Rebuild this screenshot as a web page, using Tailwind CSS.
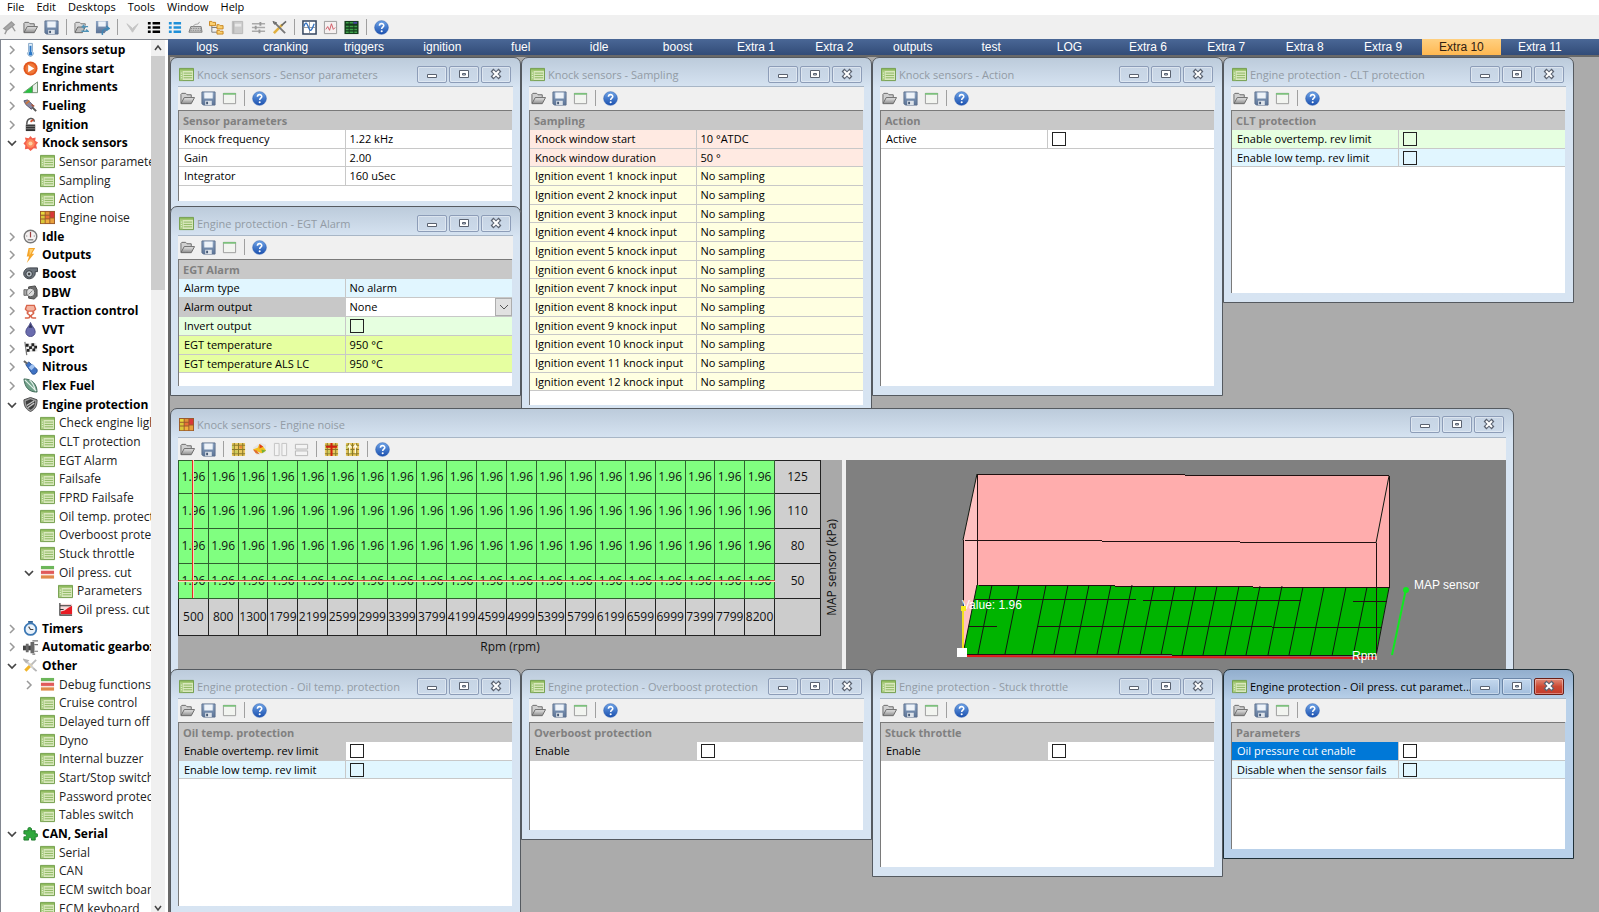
<!DOCTYPE html>
<html lang="en">
<head>
  <meta charset="UTF-8" />
  <meta name="viewport" content="width=device-width, initial-scale=1.0" />
  <title>ECU Client</title>
  <script src="https://cdn.jsdelivr.net/npm/@tailwindcss/browser@4"></script>
</head>
<body class="h-screen flex flex-col overflow-hidden bg-[#f0f0f0] text-black text-[12px] leading-4 font-['Open_Sans','Noto_Sans',sans-serif]">

  <!-- Icon set -->
  <svg class="absolute size-0" aria-hidden="true">
    <defs>
      <linearGradient id="g-blue" x2="0" y2="1"><stop stop-color="#6ea4e8" /><stop offset="1" stop-color="#1a4fae" /></linearGradient>
      <linearGradient id="g-grey" x2="0" y2="1"><stop stop-color="#e8e8e8" /><stop offset="1" stop-color="#8c8c8c" /></linearGradient>
      <linearGradient id="g-disk" x2="0" y2="1"><stop stop-color="#8fa6c4" /><stop offset="1" stop-color="#5b7396" /></linearGradient>
    </defs>
    <symbol id="i-open" viewBox="0 0 16 16"><path d="M1 13V3.500L2 2.500h4l1.500 1.500H12v2.500" fill="#d0d0d0" stroke="#666" /><path d="M1 13.500L4.500 7H15.500L12 13.500z" fill="url(#g-grey)" stroke="#666" /></symbol>
    <symbol id="i-save" viewBox="0 0 16 16"><path d="M1 1h14v14H2.500L1 13.500z" fill="url(#g-disk)" stroke="#5c6f8c" /><path d="M3.500 1.500h9V8h-9z" fill="#eef3f9" /><path d="M4.500 10.500h7V15h-7z" fill="#dde3ea" /><path d="M5.500 11.500h2V14h-2z" fill="#475a75" /></symbol>
    <symbol id="i-window" viewBox="0 0 16 16"><path d="M1.500 2.500h13v11h-13z" fill="#f2f4f0" stroke="#9a9a9a" /><path d="M1 2h14v2H1z" fill="#7cc07c" /></symbol>
    <symbol id="i-help" viewBox="0 0 16 16"><circle cx="8" cy="8" r="7.300" fill="url(#g-blue)" stroke="#2a5cb0" stroke-width=".6" /><path d="M5.800 6.200c0-3 4.600-3 4.600-.3 0 1.700-2.200 1.800-2.200 3.600" fill="none" stroke="#fff" stroke-width="1.700" /><circle cx="8.200" cy="11.900" r="1.100" fill="#fff" /></symbol>
    <symbol id="i-plug" viewBox="0 0 16 16"><path d="M2 9l8-7 3 3-8 6zM5 11l-2 4M11 7l3 5" fill="#a8a8a8" stroke="#999" stroke-width="1.500" /></symbol>
    <symbol id="i-openarrow" viewBox="0 0 16 16"><path d="M1 13V3.500L2 2.500h4l1.500 1.500H12v2" fill="#d8d8d8" stroke="#777" /><path d="M1 13.500L4 7.500H12L9 13.500z" fill="#bbb" stroke="#666" /><path d="M15 7H9l2-2M9 7l2 2M8 12h7l-2-2" fill="none" stroke="#4f93b8" stroke-width="1.400" /></symbol>
    <symbol id="i-savearrow" viewBox="0 0 16 16"><path d="M1 1h13v8l-4 5H1z" fill="url(#g-disk)" /><path d="M3.500 1.500h8V7h-8z" fill="#eef3f9" /><path d="M8 16c-1-5 1-7 7-7l-3-2.500M15 9l-3 2.500" fill="none" stroke="#3f87b4" stroke-width="1.600" /></symbol>
    <symbol id="i-vee" viewBox="0 0 16 16"><path d="M2 4l6 9 6-9-6 5z" fill="#c4c4c4" stroke="#c4c4c4" /></symbol>
    <symbol id="i-list" viewBox="0 0 16 16"><path d="M2 3.500h3M7 3.500h8M2 8h3M7 8h8M2 12.500h3M7 12.500h8" stroke="currentColor" stroke-width="2.600" /></symbol>
    <symbol id="i-keyboard" viewBox="0 0 16 16"><path d="M3 7h11l1 6H1z" fill="#c9c9c9" stroke="#777" /><path d="M3 9h11M2.500 11h12" stroke="#888" stroke-dasharray="1.500 1" /><path d="M6 7c0-4 6-1 6-5" fill="none" stroke="#999" /></symbol>
    <symbol id="i-folders" viewBox="0 0 16 16"><path d="M3 6v7h6M3 8h6" fill="none" stroke="#777" /><path d="M.5 1.500h2.500l1 1h3v3.500h-6.500zM8.500 5h2.500l1 1h3v3.500h-6.500zM8.500 11h2.500l1 1h3v3h-6.500z" fill="#fbd070" stroke="#c7841d" /></symbol>
    <symbol id="i-doc" viewBox="0 0 16 16"><path d="M2.500 1.500h11v13h-11z" fill="#ccc" stroke="#b8b8b8" /><path d="M5 4h7v3H5z" fill="#e8e8e8" /><path d="M4 2v12" stroke="#aaa" /></symbol>
    <symbol id="i-sliders" viewBox="0 0 16 16"><path d="M1 4h14M1 8h14M1 12h14" stroke="#aaa" stroke-width="1.400" /><path d="M10 2v4M5 6v4M9 10v4" stroke="#999" stroke-width="2" /></symbol>
    <symbol id="i-tools" viewBox="0 0 16 16"><path d="M2 14L11 5" stroke="#e0b040" stroke-width="2.800" /><path d="M10 6l5-4.500" stroke="#666" stroke-width="1.600" /><path d="M3 3l11 11" stroke="#777" stroke-width="2" /><path d="M1 1.500l1.500 3L5 3z" fill="#888" stroke="#666" /></symbol>
    <symbol id="i-toolslight" viewBox="0 0 16 16"><path d="M2.500 13.500L9 7" stroke="#f0b428" stroke-width="3.200" /><path d="M9 7l5-5" stroke="#bbb" stroke-width="2" /><path d="M4 4l7 7" stroke="#cfcfcf" stroke-width="2.200" /><path d="M1.500 2l2 2.500L5 3zM11 11l3.500 3" fill="#ccc" stroke="#b5b5b5" stroke-width="2" /></symbol>
    <symbol id="i-graph" viewBox="0 0 16 16"><path d="M1 1h14v14H1z" fill="#fff" stroke="#344660" stroke-width="1.600" /><path d="M8 2v12M2 8h12" stroke="#999" /><path d="M2 7c2-6 3-4 5 1s3 4 6-4" fill="none" stroke="#3170c0" stroke-width="1.400" /></symbol>
    <symbol id="i-graphred" viewBox="0 0 16 16"><path d="M1.500 1.500h13v13h-13z" fill="#f5f0f0" stroke="#999" /><path d="M3 10l2-3 2 4 2-7 2 6 2-2" fill="none" stroke="#d05560" /></symbol>
    <symbol id="i-bars" viewBox="0 0 16 16"><path d="M.5 1h15v14H.5z" fill="#143c1c" /><path d="M2 3h3M6 3h4M2 7h3M6 7h4M11 7h3M2 10h3M6 10h4M11 10h3M2 13h3M6 13h4M11 13h3" stroke="#3fa14b" stroke-width="1.600" /><path d="M10 3h4" stroke="#4c46a8" stroke-width="2" /></symbol>
    <symbol id="i-heat" viewBox="0 0 16 16"><path d="M1 1h14v14H1z" fill="#e8c860" /><path d="M3.500 1v14M8 1v14M12.500 1v14M1 3.500h14M1 8h14M1 12.500h14" stroke="#8a7a28" stroke-width="1.100" /><path d="M9 4h3v3H9z" fill="#f08a3a" /><path d="M1 4h2v3H1zM4 9h3v3H4z" fill="#c7cc5c" /></symbol>
    <symbol id="i-surface" viewBox="0 0 16 16"><path d="M1 6l4 8 10-3V3L9 1z" fill="#e4e4e4" /><path d="M1 8l5-2 2-4 4 3 3 4-5 3z" fill="#f4c020" /><path d="M8 2l4 3-4 2z" fill="#e04018" /><path d="M1 8l4 1 3 4-4-1z" fill="#e0702c" /><path d="M10 8l5 1-4 3z" fill="#7ab034" /></symbol>
    <symbol id="i-cols" viewBox="0 0 16 16"><path d="M1.500 1.500h5v13h-5zM9.500 1.500h5v13h-5z" fill="#f3f3f3" stroke="#c2c2c2" /></symbol>
    <symbol id="i-rows" viewBox="0 0 16 16"><path d="M1.500 2.500h13v5h-13zM1.500 9.500h13v5h-13z" fill="#f3f3f3" stroke="#b5b5b5" /></symbol>
    <symbol id="i-heatred" viewBox="0 0 16 16"><use href="#i-heat" /><path d="M8 1v14M2 5h12" stroke="#d02010" stroke-width="2.200" /></symbol>
    <symbol id="i-heatmove" viewBox="0 0 16 16"><use href="#i-heat" /><path d="M5 12V4M11 12V4M3 6l2-3 2 3M9 6l2-3 2 3" fill="none" stroke="#fffbe0" stroke-width="1.400" /></symbol>

    <symbol id="i-form" viewBox="0 0 16 16"><path d="M.5 1.500h15v13H.5z" fill="#d9e8bd" stroke="#6d9a45" /><path d="M1 2h14v2H1z" fill="#8fbb5e" /><path d="M1 4h3v10H1z" fill="#a9cc80" /><path d="M5 6.500h9M5 9h9M5 11.500h9" stroke="#8ab45e" /><path d="M2 6.500h1M2 9h1M2 11.500h1" stroke="#f4faea" /></symbol>
    <symbol id="i-map" viewBox="0 0 16 16"><path d="M0 1h16v14H0z" fill="#9a5a2c" /><path d="M1 2h4v3H1z" fill="#e8d83c" /><path d="M6 2h4v3H6z" fill="#e09038" /><path d="M11 2h4v6h-4z" fill="#d83838" /><path d="M1 6h4v3H1zM1 10h4v4H1z" fill="#d8c838" /><path d="M6 6h4v3H6z" fill="#e87038" /><path d="M6 10h4v4H6z" fill="#f0b040" /><path d="M11 9h4v5h-4z" fill="#e8a03c" /></symbol>
    <symbol id="i-thermo" viewBox="0 0 16 16"><path d="M6 1.500h4V10a3 3 0 1 1-4 0z" fill="#e8f2fa" stroke="#7fa3c4" /><path d="M8 4v8" stroke="#2b78c8" stroke-width="2" /><circle cx="8" cy="12.500" r="2" fill="#2b78c8" /></symbol>
    <symbol id="i-play" viewBox="0 0 16 16"><circle cx="8" cy="8" r="7.500" fill="#e2571e" /><circle cx="8" cy="8" r="5.500" fill="#f07838" /><path d="M5.500 4l6.500 4-6.500 4z" fill="#fff" /></symbol>
    <symbol id="i-ramp" viewBox="0 0 16 16"><path d="M.5 13.500L15.500 2v11.500z" fill="#e8f0e8" stroke="#6b8a6b" /><path d="M1 13.500L10 6.500v7z" fill="#28c040" /><path d="M10 6v7.500" stroke="#6b8a6b" /></symbol>
    <symbol id="i-injector" viewBox="0 0 16 16"><path d="M1 3l4-1 6 6-2 4-6-5z" fill="#8a87a0" stroke="#55526a" /><path d="M3 6l4-3" stroke="#c87840" stroke-width="2" /><path d="M10 10l4 4" stroke="#555" stroke-width="2" /><path d="M9 7l3 2" stroke="#b0583c" stroke-width="1.500" /></symbol>
    <symbol id="i-coil" viewBox="0 0 16 16"><path d="M3 8h10v7H3z" fill="#333" /><path d="M4 8c0-8 8-8 8-3" fill="none" stroke="#555" stroke-width="1.600" /><path d="M3 10h10M3 12.500h10" stroke="#999" stroke-width=".8" /><path d="M8 5l3-2" stroke="#d05030" stroke-width="2" /></symbol>
    <symbol id="i-knock" viewBox="0 0 16 16"><path d="M8 0l2 2.500 3.500-1-.5 3.500 3 2-2 2.500 1 4-3.500-.5L8 16l-2.500-2.500-3.500.5.500-4L.5 8 3 5 2 1.500l4 1z" fill="#f4604c" /><circle cx="8" cy="8" r="4.500" fill="#ff8a5c" /><circle cx="8" cy="8" r="2.200" fill="#ffd0a0" /></symbol>
    <symbol id="i-gauge" viewBox="0 0 16 16"><circle cx="8" cy="8" r="6.700" fill="#f4f1f1" stroke="#777" stroke-width="1.500" /><path d="M8 3v6" stroke="#a04040" stroke-width="1.300" /><path d="M5 11.500h6" stroke="#888" stroke-width="1.500" /><path d="M3.500 7.500h1M11.500 7.500h1" stroke="#666" /></symbol>
    <symbol id="i-bolt" viewBox="0 0 16 16"><path d="M6 0h7L9.500 6H12L4 16l2.500-7H4z" fill="#f5a52a" /><path d="M7 1h4L7 8z" fill="#ffd070" /></symbol>
    <symbol id="i-turbo" viewBox="0 0 16 16"><path d="M7 2h8.500v4H13c1 6-5 9-9 7C-2 10 1 2 7 2z" fill="#6b727a" stroke="#3b4046" /><circle cx="6.500" cy="8.500" r="3.500" fill="#b9c0c6" stroke="#33383c" /><circle cx="6.500" cy="8.500" r="1.300" fill="#444" /></symbol>
    <symbol id="i-throttle" viewBox="0 0 16 16"><path d="M6 2l7-1 2 4v7l-3 3-6-1z" fill="#6d6d6d" stroke="#444" /><circle cx="8" cy="8" r="4.500" fill="#dcdcdc" stroke="#555" /><path d="M1 5h3v6H1z" fill="#a8a8a8" stroke="#666" /><path d="M6 10l4-4" stroke="#888" /></symbol>
    <symbol id="i-traction" viewBox="0 0 16 16"><path d="M4 1.500h8l1.500 4-2 2h-7l-2-2z" fill="#f4b3a0" stroke="#d8644a" stroke-width="1.400" /><path d="M6 8c-5 3 5 3 0 7M10 8c5 3-5 3 0 7M2 15h4M10 15h4" fill="none" stroke="#d8644a" stroke-width="1.700" /></symbol>
    <symbol id="i-drop" viewBox="0 0 16 16"><path d="M8 .5c1 4 5 6 5 10a5 5 0 0 1-10 0c0-4 4-6 5-10z" fill="#6a6cae" stroke="#4b4c86" /><path d="M8 1c0 2-2 4-2 5h4c0-1-2-3-2-5z" fill="#33345c" /></symbol>
    <symbol id="i-flag" viewBox="0 0 16 16"><path d="M2 1l2 14" stroke="#777" stroke-width="1.300" /><path d="M3 3l11-1 1.500 9-11 1z" fill="#e8e8e8" /><path d="M3 3h3v3H3zM9 2.500h3v3H9zM6.500 5.500h3v3h-3zM12 5h3v3h-3zM4 8.500h3v3H4zM10 8h3v3h-3z" fill="#222" /></symbol>
    <symbol id="i-bottle" viewBox="0 0 16 16"><path d="M3 5l3-3 9 8c1 3-2 6-5 5z" fill="#3f72c4" stroke="#27508f" /><path d="M6 8l4-4 3 3-4 4z" fill="#9fc0ee" /><path d="M1 1l3.500 3" stroke="#666" stroke-width="2.200" /></symbol>
    <symbol id="i-leaf" viewBox="0 0 16 16"><path d="M1 1c8 0 14 5 14 14C6 15 2 10 1 1z" fill="#6fa088" stroke="#3d6655" /><path d="M2 2l12 12M7 2c3 3 5 6 6 11" fill="none" stroke="#e4f0ea" stroke-width="1.300" /></symbol>
    <symbol id="i-shield" viewBox="0 0 16 16"><path d="M8 .5l7 2.500c0 7-2 10-7 12.500C3 13 1 10 1 3z" fill="#9a9a9a" stroke="#444" /><path d="M8 2.500l5 2c0 5-1.500 7-5 9-3.500-2-5-4-5-9z" fill="#3e3e3e" /><path d="M4 9l8-5M5 11.500l7-5" stroke="#c8c8c8" stroke-width="1.400" /></symbol>
    <symbol id="i-stack" viewBox="0 0 16 16"><path d="M1 1h14v3.500H1z" fill="#6cb65a" /><path d="M1 6h14v3.500H1z" fill="#e05a5a" /><path d="M1 11h14v3.500H1z" fill="#e08a4a" /><path d="M1 5.200h14M1 10.200h14" stroke="#f6e4dc" /></symbol>
    <symbol id="i-curve" viewBox="0 0 16 16"><path d="M2 2h13v11H2z" fill="#f4dada" /><path d="M3 13V10l4-1 4-3 4-2v9z" fill="#e81c24" /><path d="M2 1v13h13M2 4h12M2 8h4" fill="none" stroke="#333" stroke-width="1.200" /></symbol>
    <symbol id="i-clock" viewBox="0 0 16 16"><path d="M5.500 0h5v2h-5z" fill="#2c5f94" /><circle cx="8" cy="8.700" r="6.200" fill="#eaf2fa" stroke="#3c78b4" stroke-width="1.900" /><path d="M6 6l2 3h3" fill="none" stroke="#444" stroke-width="1.200" /></symbol>
    <symbol id="i-gearbox" viewBox="0 0 16 16"><path d="M0 6h12v5H0z" fill="#444" /><path d="M8 2h4v12H8zM3 4h3v9H3z" fill="#6a6a6a" /><path d="M10 1h6M12 5h4M12 12h4M10 15h3" stroke="#777" stroke-width="1.300" /></symbol>
    <symbol id="i-puzzle" viewBox="0 0 16 16"><path d="M1 5h4.500c-2-4.500 5-4.500 3.500 0H13v3.500c4-1.500 4 4 0 3V15H9c1-3.500-4-3.500-3 0H1v-3.500c3.500 1 3.500-4 0-3z" fill="#2fa83c" stroke="#1d7a2a" /></symbol>
  </svg>

  <!-- Menu bar -->
  <nav class="flex h-[15px] shrink-0 items-center bg-white pl-[7px] gap-3 text-[11px] leading-[14px] pb-px">
    <a href="#file">File</a>
    <a href="#edit">Edit</a>
    <a href="#desktops">Desktops</a>
    <a href="#tools">Tools</a>
    <a href="#window">Window</a>
    <a href="#help">Help</a>
  </nav>

  <!-- Main toolbar -->
  <div id="main-toolbar" class="flex h-6 shrink-0 items-center gap-[6px] pl-0.5"></div>

  <div class="flex min-h-0 flex-1">

    <!-- Settings tree -->
    <aside class="flex w-[168px] shrink-0 border-t border-l border-[#828790] bg-white">
      <ul id="tree" class="w-[150px] shrink-0 overflow-hidden"></ul>
      <div class="flex w-[14px] flex-col items-center bg-[#f0f0f0]">
        <button aria-label="Scroll up" class="flex h-4 items-center"><svg class="w-2 h-2" viewBox="0 0 8 8"><path d="M1 6l3-4 3 4" fill="none" stroke="#444" stroke-width="1.500" /></svg></button>
        <div class="h-[234px] w-full bg-[#cdcdcd]"></div>
        <div class="flex-1"></div>
        <button aria-label="Scroll down" class="flex h-2 items-center"><svg class="w-2 h-2" viewBox="0 0 8 8"><path d="M1 2l3 4 3-4" fill="none" stroke="#444" stroke-width="1.500" /></svg></button>
      </div>
    </aside>

    <div class="flex min-w-0 flex-1 flex-col">
      <!-- Desktop tabs -->
      <div id="tabs" class="flex h-4 shrink-0 bg-linear-to-b from-[#4a6796] to-[#324c78] pr-5 font-['Liberation_Sans',Arial,sans-serif] text-[12px] text-white"></div>

      <!-- Desktop with its windows -->
      <main id="desktop" class="relative flex-1 overflow-hidden border-t-2 border-l-2 border-[#696969] bg-[#ababab]"></main>
    </div>
  </div>

  <!-- Content of the engine noise window -->
  <template id="noise-body">
    <div class="flex min-h-0 flex-1">
      <div class="relative w-[664px] shrink-0 bg-[#a9a9a9] text-[#111]">
        <div class="flex">
          <table id="noise-table" class="w-[643px] table-fixed border-collapse text-center"></table>
          <div class="flex flex-1 items-end justify-center pb-5">
            <span class="rotate-180 [writing-mode:vertical-rl]">MAP sensor (kPa)</span>
          </div>
        </div>
        <div class="pt-[3px] text-center">Rpm (rpm)</div>
        <div class="absolute top-0 left-[14px] h-[138px] w-0.5 border-l border-[#e03020] bg-[#ffd0c0]"></div>
        <div class="absolute top-[120px] left-0 h-0.5 w-[597px] border-t border-[#c05838] bg-[#ffd8c0]"></div>
      </div>
      <div class="w-1 bg-[#f0f0f0]"></div>
      <svg class="min-w-0 flex-1 bg-[#808080] font-['Liberation_Sans',Arial,sans-serif] text-[12px]" viewBox="0 0 660 240" preserveAspectRatio="xMinYMin slice">
        <path d="M131 14L543 16V128L131 125z" fill="#ffadad" />
        <path d="M543 16L530 83V196L543 128z" fill="#ffadad" />
        <path d="M117 80L131 14V125L117 194z" fill="#ffc1c1" />
        <path d="M131 125L543 128L530 196L117 194z" fill="#00b400" />
        <g fill="none" stroke="#201010" shape-rendering="crispEdges">
          <path d="M131 14L543 16M117 80L530 83M131 125L543 128M117 194L530 196M131 14V125M117 80V194M543 16V128M530 83V196" />
          <path d="M129 139H290M297 140H455M507 141H541M123 166H151M192 166H314L535 168" />
        </g>
        <path d="M131 14L117 80M543 16L530 83M131 125L117 194M543 128L530 196M132 194l14-69M159 194l14-69M186 194l14-69M208 194l14-69M229 194l14-69M251 194l14-69M272 194l14-69M294 195l14-69M315 195l14-69M336 195l14-69M357 195l14-69M379 195l14-69M400 195l14-69M422 195l14-69M443 195l14-68M464 196l14-69M486 196l14-69M507 196l14-69" fill="none" stroke="#101810" />
        <path d="M117 196L530 198" stroke="#e01818" stroke-width="2" />
        <path d="M546 195L560 129" stroke="#10e820" stroke-width="2" />
        <circle cx="560" cy="130" r="3" fill="#10e820" />
        <path d="M117 148V190" stroke="#f4e020" stroke-width="2" />
        <path d="M111 188h10v9h-10z" fill="#fff" />
        <g fill="#fff">
          <text x="116" y="149">Value: 1.96</text>
          <text x="568" y="129">MAP sensor</text>
          <text x="506" y="200">Rpm</text>
        </g>
        <path d="M115 146h5v5h-5z" fill="#f8ec20" />
      </svg>
    </div>
  </template>

  <script>
    function icon(name, color) {
      return `<svg class="size-[15px] shrink-0 ${color || ''}" aria-hidden="true"><use href="#i-${name}"/></svg>`;
    }

    function toolbar(items) {
      return items.map(item => {
        if (item === '|') return '<span class="mx-px h-4 w-px bg-[#a0a0a0]"></span>';
        const [name, color] = item.split(' ');
        return `<button class="flex" aria-label="${name}">${icon(name, color)}</button>`;
      }).join('');
    }

    document.getElementById('main-toolbar').innerHTML = toolbar([
      'plug', 'open', 'save', '|', 'openarrow', 'savearrow', '|',
      'vee', 'list text-black', 'list text-[#2090d8]', 'keyboard', 'folders', 'doc', 'sliders', 'tools', '|',
      'graph', 'graphred', 'bars', '|', 'help'
    ]);

    // Settings tree: [level, state, icon, label]
    const tree = [
      [0, '>', 'thermo', 'Sensors setup'],
      [0, '>', 'play', 'Engine start'],
      [0, '>', 'ramp', 'Enrichments'],
      [0, '>', 'injector', 'Fueling'],
      [0, '>', 'coil', 'Ignition'],
      [0, 'v', 'knock', 'Knock sensors'],
      [1, '', 'form', 'Sensor parameters'],
      [1, '', 'form', 'Sampling'],
      [1, '', 'form', 'Action'],
      [1, '', 'map', 'Engine noise'],
      [0, '>', 'gauge', 'Idle'],
      [0, '>', 'bolt', 'Outputs'],
      [0, '>', 'turbo', 'Boost'],
      [0, '>', 'throttle', 'DBW'],
      [0, '>', 'traction', 'Traction control'],
      [0, '>', 'drop', 'VVT'],
      [0, '>', 'flag', 'Sport'],
      [0, '>', 'bottle', 'Nitrous'],
      [0, '>', 'leaf', 'Flex Fuel'],
      [0, 'v', 'shield', 'Engine protection'],
      [1, '', 'form', 'Check engine light'],
      [1, '', 'form', 'CLT protection'],
      [1, '', 'form', 'EGT Alarm'],
      [1, '', 'form', 'Failsafe'],
      [1, '', 'form', 'FPRD Failsafe'],
      [1, '', 'form', 'Oil temp. protection'],
      [1, '', 'form', 'Overboost protection'],
      [1, '', 'form', 'Stuck throttle'],
      [1, 'v', 'stack', 'Oil press. cut'],
      [2, '', 'form', 'Parameters'],
      [2, '', 'curve', 'Oil press. cut'],
      [0, '>', 'clock', 'Timers'],
      [0, '>', 'gearbox', 'Automatic gearbox'],
      [0, 'v', 'toolslight', 'Other'],
      [1, '>', 'stack', 'Debug functions'],
      [1, '', 'form', 'Cruise control'],
      [1, '', 'form', 'Delayed turn off'],
      [1, '', 'form', 'Dyno'],
      [1, '', 'form', 'Internal buzzer'],
      [1, '', 'form', 'Start/Stop switch'],
      [1, '', 'form', 'Password protection'],
      [1, '', 'form', 'Tables switch'],
      [0, 'v', 'puzzle', 'CAN, Serial'],
      [1, '', 'form', 'Serial'],
      [1, '', 'form', 'CAN'],
      [1, '', 'form', 'ECM switch board'],
      [1, '', 'form', 'ECM keyboard']
    ];
    const indent = ['pl-[5px] font-bold', 'pl-[22px] text-[#222]', 'pl-[40px] text-[#222]'];
    const chevrons = {
      '': '',
      '>': '<path d="M4 2l4 4-4 4" fill="none" stroke="#999" stroke-width="1.500"/>',
      'v': '<path d="M2 4l4 4 4-4" fill="none" stroke="#444" stroke-width="1.700"/>'
    };
    document.getElementById('tree').innerHTML = tree.map(([level, state, name, label]) => `
      <li class="flex h-[19px] nth-[3n]:h-[18px] items-center whitespace-nowrap ${indent[level]}">
        <svg class="mr-[5px] size-3 shrink-0" viewBox="0 0 12 12">${chevrons[state]}</svg>
        ${icon(name)}
        <a href="#${name}" class="pl-1">${label}</a>
      </li>`).join('');

    const tabs = ['logs', 'cranking', 'triggers', 'ignition', 'fuel', 'idle', 'boost', 'Extra 1', 'Extra 2',
      'outputs', 'test', 'LOG', 'Extra 6', 'Extra 7', 'Extra 8', 'Extra 9', 'Extra 10', 'Extra 11'];
    document.getElementById('tabs').innerHTML = tabs.map(tab => `
      <button class="flex-1 leading-4 ${tab === 'Extra 10' ? 'bg-linear-to-b from-[#ffd080] to-[#ffb850] text-[#302010]' : ''}">${tab}</button>`).join('');

    // Rows of a parameter grid: [label, value, row background, label state]; value "box" is a tick box
    const white = 'bg-white', blue = 'bg-[#e1f6ff]', green = 'bg-[#e6ffe0]', lime = 'bg-[#e6ffa0]',
      pink = 'bg-[#ffeae2]', yellow = 'bg-[#ffffe1]';
    const grey = 'bg-[#c8c8c8]', picked = 'bg-[#0078d7] text-white';

    const sampling = [['Knock window start', '10 °ATDC', pink], ['Knock window duration', '50 °', pink]];
    for (let i = 1; i <= 12; i++) sampling.push([`Ignition event ${i} knock input`, 'No sampling', yellow]);

    const windows = [
      { title: 'Knock sensors - Sensor parameters', group: 'Sensor parameters', place: 'left-0 top-0 h-[154px]',
        rows: [['Knock frequency', '1.22 kHz', white], ['Gain', '2.00', white], ['Integrator', '160 uSec', white]] },
      { title: 'Engine protection - EGT Alarm', group: 'EGT Alarm', place: 'left-0 top-[149px] h-[190px]',
        rows: [['Alarm type', 'No alarm', blue], ['Alarm output', 'select', white, grey], ['Invert output', 'box', green],
          ['EGT temperature', '950 °C', lime], ['EGT temperature ALS LC', '950 °C', lime]] },
      { title: 'Knock sensors - Sampling', group: 'Sampling', place: 'left-[351px] top-0 h-[358px]', rows: sampling },
      { title: 'Knock sensors - Action', group: 'Action', place: 'left-[702px] top-0 h-[339px]',
        rows: [['Active', 'box', white]] },
      { title: 'Engine protection - CLT protection', group: 'CLT protection', place: 'left-[1053px] top-0 h-[246px]',
        rows: [['Enable overtemp. rev limit', 'box', green], ['Enable low temp. rev limit', 'box', blue]] },
      { title: 'Knock sensors - Engine noise', place: 'left-0 top-[351px] h-[300px]', noise: true },
      { title: 'Engine protection - Oil temp. protection', group: 'Oil temp. protection', place: 'left-0 top-[612px] h-[247px]',
        rows: [['Enable overtemp. rev limit', 'box', white, grey], ['Enable low temp. rev limit', 'box', blue]] },
      { title: 'Engine protection - Overboost protection', group: 'Overboost protection', place: 'left-[351px] top-[612px] h-[171px]',
        rows: [['Enable', 'box', white, grey]] },
      { title: 'Engine protection - Stuck throttle', group: 'Stuck throttle', place: 'left-[702px] top-[612px] h-[208px]',
        rows: [['Enable', 'box', white, grey]] },
      { title: 'Engine protection - Oil press. cut paramet...', group: 'Parameters', place: 'left-[1053px] top-[612px] h-[190px]', active: true,
        rows: [['Oil pressure cut enable', 'box', white, picked], ['Disable when the sensor fails', 'box', blue]] }
    ];

    function valueCell(value, id) {
      if (value === 'box') return `<input type="checkbox" id="${id}" class="block size-[14px] appearance-none border border-[#222]" />`;
      if (value === 'select') return `
        <div class="relative flex h-full items-center">
          <select id="${id}" class="h-[18px] w-full appearance-none bg-white"><option>None</option></select>
          <span class="pointer-events-none absolute top-0 right-0 flex h-[18px] w-[17px] items-center justify-center border border-[#adadad] bg-[#e1e1e1]">
            <svg class="size-[10px]" viewBox="0 0 10 10"><path d="M1 3l4 4 4-4" fill="none" stroke="#555"/></svg>
          </span>
        </div>`;
      return `<output id="${id}">${value}</output>`;
    }

    function grid(win, n) {
      return `
        <div class="mr-px mb-0.5 min-h-0 flex-1 overflow-hidden border-t border-l border-[#7a7a7a] bg-white">
          <table class="w-full table-fixed border-separate border-spacing-0 text-left text-[11px]">
            <tr class="h-[19px]"><th colspan="2" class="bg-[#c8c8c8] p-0 pl-1 font-bold text-[#808080]">${win.group}</th></tr>
            ${win.rows.map(([label, value, bg, state], i) => `
              <tr class="h-[19px] nth-[3n]:h-[18px] ${bg}">
                <td class="border-r border-b border-[#c8c8c8] p-0 pl-[5px] ${state || ''}"><label for="w${n}r${i}">${label}</label></td>
                <td class="border-b border-[#c8c8c8] p-0 pl-1">${valueCell(value, `w${n}r${i}`)}</td>
              </tr>`).join('')}
          </table>
        </div>`;
    }

    function frame(win, n) {
      const button = 'flex h-[17px] w-[30px] items-center justify-center rounded-xs border inset-shadow-[0_0_0_1px_#ffffff60]';
      const normal = win.active ? 'border-[#6b86a8] bg-linear-to-b from-[#c4d8ee] to-[#a3bedd]' : 'border-[#8d9db8] bg-linear-to-b from-[#c6d4e4] to-[#ccdaea]';
      const close = win.active ? 'border-[#6b2018] bg-linear-to-b from-[#e08a78] via-[#cc4a34] to-[#c4392a]' : normal;
      const glyph = 'fill="#fff" stroke="#5a6270"';
      const tools = win.noise
        ? ['open', 'save', '|', 'heat', 'surface', 'cols', 'rows', '|', 'heatred', 'heatmove', '|', 'help']
        : ['open', 'save', 'window', '|', 'help'];
      return `
        <section class="absolute ${win.place} ${win.noise ? 'w-[1344px]' : 'w-[351px]'} flex flex-col overflow-hidden rounded-t-[7px] border px-[7px] pb-[7px]
          ${win.active ? 'border-[#203038] bg-[#b9d1ea] bg-linear-to-b from-[#92aecd] to-[#b9d1ea] to-[30px]' : 'border-[#555a60] bg-linear-to-b from-[#bccbdb] to-[#d7e4f2] to-[30px]'}">
          <header class="flex h-[29px] shrink-0 items-center gap-[3px] border-b border-[#a8b6c6] pl-px ${win.noise ? 'pt-0.5' : 'pt-1'}">
            ${icon(win.noise ? 'map' : 'form')}
            <h2 class="min-w-0 flex-1 whitespace-nowrap pt-0.5 text-[11px] ${win.active ? 'text-black' : 'text-[#929ba5]'}">${win.title}</h2>
            <div class="flex gap-0.5 pr-0.5">
              <button aria-label="Minimize" class="${button} ${normal}"><svg class="size-3" viewBox="0 0 12 12"><path d="M1.500 6.500h9v3h-9z" ${glyph}/></svg></button>
              <button aria-label="Maximize" class="${button} ${normal}"><svg class="size-3" viewBox="0 0 12 12"><path d="M1.500 2.500h9v7h-9zM4.500 5.500v1.500h3v-1.500z" ${glyph}/></svg></button>
              <button aria-label="Close" class="${button} ${close}"><svg class="size-3" viewBox="0 0 12 12" fill="none"><path d="M2 2l8 8M10 2l-8 8" stroke="#5a6270" stroke-width="4"/><path d="M3 3l6 6M9 3l-6 6" stroke="#fff" stroke-width="2"/></svg></button>
            </div>
          </header>
          <div class="flex shrink-0 items-center gap-[6px] bg-[#f0f0f0] pl-0.5 ${win.noise ? 'h-[22px]' : 'h-[23px] pb-px'}">${toolbar(tools)}</div>
          ${win.noise ? document.getElementById('noise-body').innerHTML : grid(win, n)}
        </section>`;
    }

    document.getElementById('desktop').innerHTML = windows.map(frame).join('');

    // Engine noise map
    const rpm = [500, 800, 1300, 1799, 2199, 2599, 2999, 3399, 3799, 4199, 4599, 4999, 5399, 5799, 6199, 6599, 6999, 7399, 7799, 8200];
    const kpa = [125, 110, 80, 50];
    document.getElementById('noise-table').innerHTML = kpa.map(load => `
      <tr class="h-[35px] first:h-[33px]">
        ${rpm.map(() => '<td class="border border-[#2f6030] bg-[#80ff80] p-0">1.96</td>').join('')}
        <th class="w-[46px] border border-[#222] bg-[#cfcfcf] p-0 font-normal">${load}</th>
      </tr>`).join('') + `
      <tr class="h-[37px]">
        ${rpm.map(r => `<th class="border border-[#222] bg-[#d0d0d0] p-0 font-normal">${r}</th>`).join('')}
        <td class="border border-[#222] bg-[#cccccc]"></td>
      </tr>`;
  </script>
</body>
</html>
